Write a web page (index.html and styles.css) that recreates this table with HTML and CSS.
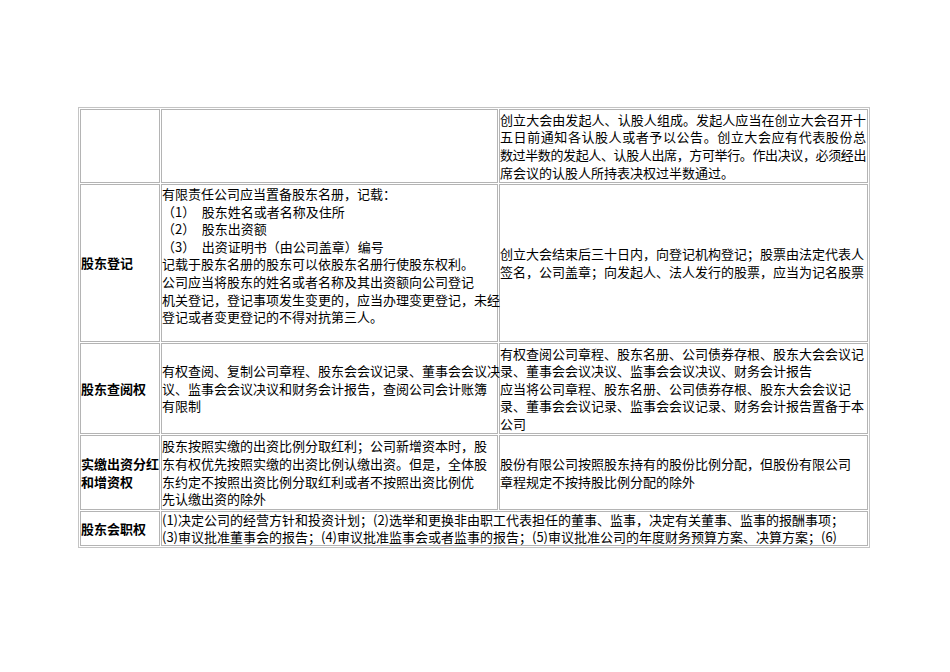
FILE: index.html
```html
<!DOCTYPE html>
<html lang="zh-CN">
<head>
<meta charset="utf-8">
<title>股东权利对比</title>
<link rel="stylesheet" href="styles.css">
</head>
<body>
<table class="grid">
  <colgroup>
    <col class="c1"><col class="c2"><col class="c3">
  </colgroup>
  <tr class="r1">
    <td></td>
    <td></td>
    <td>
      <span class="ln fill">创立大会由发起人、认股人组成。发起人应当在创立大会召开十</span>
      <span class="ln fill">五日前通知各认股人或者予以公告。创立大会应有代表股份总</span>
      <span class="ln fill tight">数过半数的发起人、认股人出席，方可举行。作出决议，必须经出</span>
      <span class="ln">席会议的认股人所持表决权过半数通过。</span>
    </td>
  </tr>
  <tr class="r2">
    <td class="lbl">股东登记</td>
    <td class="top">
      <span class="ln">有限责任公司应当置备股东名册，记载：</span>
      <span class="ln">（1）&ensp;股东姓名或者名称及住所</span>
      <span class="ln">（2）&ensp;股东出资额</span>
      <span class="ln">（3）&ensp;出资证明书（由公司盖章）编号</span>
      <span class="ln">记载于股东名册的股东可以依股东名册行使股东权利。</span>
      <span class="ln">公司应当将股东的姓名或者名称及其出资额向公司登记</span>
      <span class="ln">机关登记，登记事项发生变更的，应当办理变更登记，未经</span>
      <span class="ln">登记或者变更登记的不得对抗第三人。</span>
    </td>
    <td>
      <span class="ln">创立大会结束后三十日内，向登记机构登记；股票由法定代表人</span>
      <span class="ln">签名，公司盖章；向发起人、法人发行的股票，应当为记名股票</span>
    </td>
  </tr>
  <tr class="r3">
    <td class="lbl">股东查阅权</td>
    <td>
      <span class="ln">有权查阅、复制公司章程、股东会会议记录、董事会会议决</span>
      <span class="ln">议、监事会会议决议和财务会计报告，查阅公司会计账簿</span>
      <span class="ln">有限制</span>
    </td>
    <td>
      <span class="ln">有权查阅公司章程、股东名册、公司债券存根、股东大会会议记</span>
      <span class="ln">录、董事会会议决议、监事会会议决议、财务会计报告</span>
      <span class="ln">应当将公司章程、股东名册、公司债券存根、股东大会会议记</span>
      <span class="ln">录、董事会会议记录、监事会会议记录、财务会计报告置备于本</span>
      <span class="ln">公司</span>
    </td>
  </tr>
  <tr class="r4">
    <td class="lbl"><span class="ln">实缴出资分红</span><span class="ln">和增资权</span></td>
    <td>
      <span class="ln">股东按照实缴的出资比例分取红利；公司新增资本时，股</span>
      <span class="ln">东有权优先按照实缴的出资比例认缴出资。但是，全体股</span>
      <span class="ln">东约定不按照出资比例分取红利或者不按照出资比例优</span>
      <span class="ln">先认缴出资的除外</span>
    </td>
    <td>
      <span class="ln">股份有限公司按照股东持有的股份比例分配，但股份有限公司</span>
      <span class="ln">章程规定不按持股比例分配的除外</span>
    </td>
  </tr>
  <tr class="r5">
    <td class="lbl">股东会职权</td>
    <td colspan="2" class="wide">
      <span class="ln">(1)决定公司的经营方针和投资计划；(2)选举和更换非由职工代表担任的董事、监事，决定有关董事、监事的报酬事项；</span>
      <span class="ln">(3)审议批准董事会的报告；(4)审议批准监事会或者监事的报告；(5)审议批准公司的年度财务预算方案、决算方案；(6)</span>
    </td>
  </tr>
</table>
</body>
</html>
```

FILE: styles.css
```css
html, body {
  margin: 0;
  padding: 0;
  background: #ffffff;
}

body {
  font-family: "Noto Sans CJK SC", "Noto Sans", sans-serif;
  font-size: 13px;
  color: #000000;
}

.grid {
  margin: 107px 0 0 78px;
  border: 1px solid #c4c4c4;
  border-collapse: separate;
  border-spacing: 1px;
  table-layout: fixed;
  width: 792px;
}

.c1 { width: 80px; }
.c2 { width: 337px; }
.c3 { width: 369px; }

.grid td {
  border: 1px solid #b4b4b4;
  padding: 0;
  vertical-align: middle;
  white-space: nowrap;
  line-height: 17.6px;
  overflow: visible;
}

.grid td.top {
  vertical-align: top;
}

.grid td.wide {
  line-height: 16.5px;
}

.r1 td { height: 72px; }
.r2 td { height: 156px; }
.r3 td { height: 89px; }
.r4 td { height: 73px; }
.r5 td { height: 33px; }

.lbl {
  font-weight: bold;
}

.ln {
  display: block;
}

.fill {
  text-align: justify;
  text-align-last: justify;
  width: 366px;
}

.tight {
  letter-spacing: -0.4px;
}
```
